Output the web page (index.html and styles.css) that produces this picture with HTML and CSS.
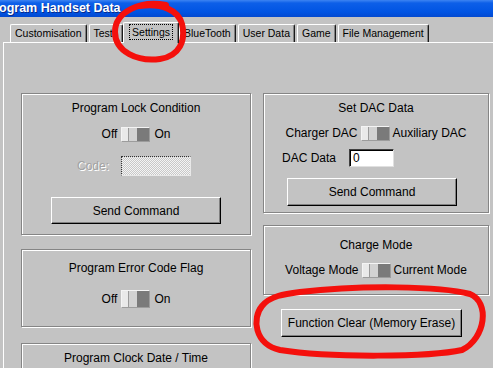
FILE: index.html
```html
<!DOCTYPE html>
<html lang="en">
<head>
  <meta charset="UTF-8" />
  <meta name="viewport" content="width=device-width, initial-scale=1.0" />
  <title>Program Handset Data</title>
  <link rel="stylesheet" href="styles.css">
</head>
<body>
  <div class="titlebar"><span class="title">ogram Handset Data</span></div>

  <div class="window">
    <div class="tabs">
      <div class="tab">Customisation</div>
      <div class="tab">Tests</div>
      <div class="tab active"><span class="focus">Settings</span></div>
      <div class="tab">BlueTooth</div>
      <div class="tab">User Data</div>
      <div class="tab">Game</div>
      <div class="tab">File Management</div>
    </div>

    <div class="panel">
      <div class="columns">
        <div class="col">
          <div class="group lock">
            <div class="group-title">Program Lock Condition</div>
            <div class="toggle-row">
              <span>Off</span><span class="switch"></span><span>On</span>
            </div>
            <div class="code-row">
              <span class="disabled-label">Code:</span>
              <span class="disabled-input"></span>
            </div>
            <button class="btn send">Send Command</button>
          </div>

          <div class="group error">
            <div class="group-title">Program Error Code Flag</div>
            <div class="toggle-row tall">
              <span>Off</span><span class="switch"></span><span>On</span>
            </div>
          </div>

          <div class="group clock">
            <div class="group-title">Program Clock Date / Time</div>
          </div>
        </div>

        <div class="col">
          <div class="group dac">
            <div class="group-title">Set DAC Data</div>
            <div class="toggle-row">
              <span>Charger DAC</span><span class="switch"></span><span>Auxiliary DAC</span>
            </div>
            <div class="dac-row">
              <span>DAC Data</span>
              <span class="text-input">0</span>
            </div>
            <button class="btn send">Send Command</button>
          </div>

          <div class="group charge">
            <div class="group-title">Charge Mode</div>
            <div class="toggle-row">
              <span>Voltage Mode</span><span class="switch"></span><span>Current Mode</span>
            </div>
          </div>

          <button class="btn clear">Function Clear (Memory Erase)</button>
        </div>
      </div>
    </div>
  </div>

  <!-- hand drawn red marks over the screenshot -->
  <svg class="marks" width="493" height="368" viewBox="0 0 493 368">
    <path d="M166 5 C140 0 115 12 115 32 C115 52 138 62 160 59 C180 56 186 40 182 24 C178 10 162 3 140 6" />
    <path d="M300 292 C360 285 440 286 470 294 C490 302 486 338 462 350 C430 357 330 358 280 350 C254 344 252 318 262 306 C270 296 284 294 300 292" />
  </svg>
</body>
</html>
```

FILE: styles.css
```css
html, body {
  overflow: hidden;
}
body {
  margin: 0;
  background-color: #c3c3c3;
  font-family: "Liberation Sans", Arial, sans-serif;
  font-size: 12px;
  color: #000;
  height: 368px;
}
.titlebar {
  height: 17px;
  background: linear-gradient(#3d84f2 0, #0d5fe8 3px, #0054e3 12px, #0349d0 17px);
  overflow: hidden;
}
.title {
  display: block;
  margin-left: -1px;
  color: #fff;
  font-weight: bold;
  font-size: 12.5px;
  line-height: 16px;
  text-shadow: 1px 1px 0 #0a2a8a;
  white-space: nowrap;
}
.window {
  height: 351px;
  overflow: hidden;
}
.tabs {
  display: flex;
  align-items: flex-end;
  gap: 2px;
  height: 25px;
  padding-left: 10px;
}
.tab {
  box-sizing: border-box;
  height: 18px;
  padding: 0 4px;
  border-top: 1px solid #fff;
  border-left: 1px solid #fff;
  border-right: 1px solid #1a1a1a;
  border-radius: 2px 2px 0 0;
  box-shadow: inset -1px 0 0 #808080;
  font-size: 10.5px;
  line-height: 17px;
  white-space: nowrap;
}
.tab.active {
  position: relative;
  z-index: 1;
  height: 21px;
  margin: 0 -2px -1px;
  padding: 2px 6px 0;
  background: #c3c3c3;
  line-height: 13px;
}
.focus {
  display: inline-block;
  padding: 0 2px;
  outline: 1px dotted #000;
  line-height: 14px;
}
.panel {
  margin-left: 3px;
  border-top: 1px solid #fff;
  border-left: 1px solid #fff;
  padding: 50px 0 0 17px;
}
.columns {
  display: grid;
  grid-template-columns: 230px 226px;
  column-gap: 12px;
  align-items: start;
}
.col {
  display: flex;
  flex-direction: column;
}
.group {
  box-sizing: border-box;
  display: flex;
  flex-direction: column;
  align-items: center;
  border: 1px solid #858585;
  box-shadow: inset 1px 1px 0 #fff, 1px 1px 0 #fff;
}
.group-title {
  line-height: 14px;
}
.lock { height: 142px; padding-top: 7px; margin-bottom: 14px; }
.error { height: 78px; padding-top: 11px; margin-bottom: 16px; }
.clock { height: 60px; padding-top: 7px; }
.dac { height: 120px; padding-top: 7px; margin-bottom: 12px; }
.charge { height: 70px; padding-top: 12px; margin-bottom: 14px; }

.toggle-row {
  display: flex;
  align-items: center;
  gap: 4px;
  height: 16px;
  margin-top: 11px;
}
.dac .toggle-row,
.charge .toggle-row {
  margin-top: 10px;
  gap: 3px;
}
.toggle-row.tall {
  height: 18px;
  margin-top: 15px;
}
.switch {
  box-sizing: border-box;
  width: 29px;
  height: 15px;
  border: 1px solid #f4f4f4;
  border-right-color: #9c9c9c;
  border-bottom-color: #9c9c9c;
  background: linear-gradient(to right, #e9e9e9 0 6px, #9a9a9a 6px 7px, #d2d2d2 7px 15px, #7a7a7a 15px);
}
.tall .switch {
  height: 18px;
}
.code-row {
  display: flex;
  align-items: center;
  gap: 12px;
  height: 20px;
  margin-top: 14px;
  margin-right: 4px;
}
.disabled-label {
  color: #a2a2a2;
  text-shadow: 1px 1px 0 #fff;
}
.disabled-input {
  box-sizing: border-box;
  width: 70px;
  height: 20px;
  border: 1px dotted #333;
  border-right: 1px solid #e8e8e8;
  border-bottom: 1px solid #e8e8e8;
  background: repeating-conic-gradient(#f4f4f4 0 25%, #c8c8c8 0 50%) 0 0 / 2px 2px;
}
.dac-row {
  align-self: flex-start;
  display: flex;
  align-items: center;
  gap: 13px;
  height: 18px;
  margin-top: 8px;
  padding-left: 18px;
}
.text-input {
  box-sizing: border-box;
  width: 45px;
  height: 18px;
  padding-left: 3px;
  background: #fff;
  border-top: 1px solid #404040;
  border-left: 1px solid #404040;
  border-right: 1px solid #e0e0e0;
  border-bottom: 1px solid #e0e0e0;
  box-shadow: inset 1px 1px 0 #000;
  line-height: 16px;
}
.btn {
  box-sizing: border-box;
  background: #c3c3c3;
  font-family: "Liberation Sans", Arial, sans-serif;
  font-size: 12px;
  color: #000;
  border-top: 1px solid #fff;
  border-left: 1px solid #fff;
  border-right: 1px solid #000;
  border-bottom: 1px solid #000;
  box-shadow: inset -1px -1px 0 #808080;
  padding: 0;
}
.lock .send {
  width: 170px;
  height: 27px;
  margin-top: 21px;
}
.dac .send {
  width: 170px;
  height: 28px;
  margin-top: 11px;
  margin-right: 8px;
}
.clear {
  width: 181px;
  height: 28px;
  margin-left: 18px;
}
.marks {
  position: absolute;
  top: 0;
  left: 0;
  pointer-events: none;
}
.marks path {
  fill: none;
  stroke: #f4100c;
  stroke-width: 6;
  stroke-linecap: round;
  stroke-linejoin: round;
}
```
